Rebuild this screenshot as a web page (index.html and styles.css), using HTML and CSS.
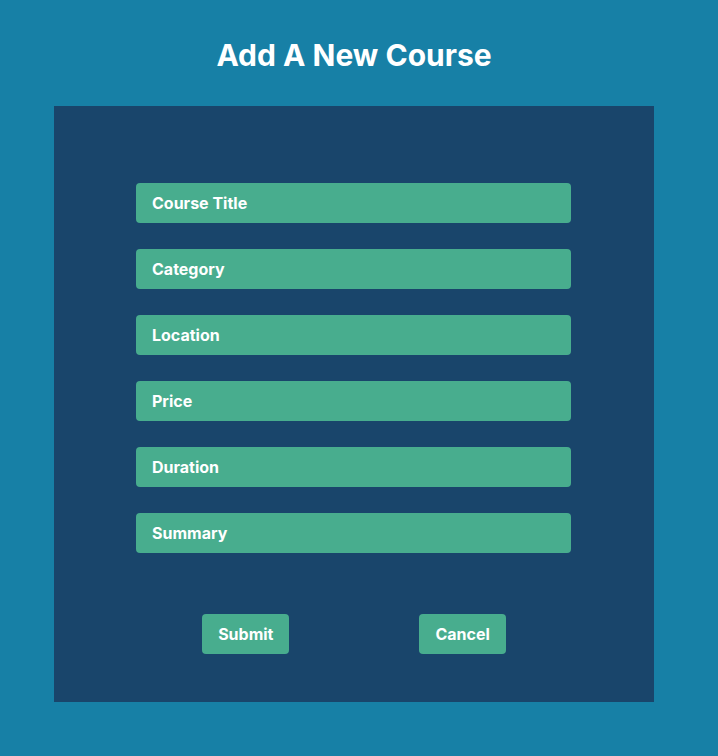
FILE: index.html
```html
<!DOCTYPE html>
<html>
<head>
<meta charset="utf-8">
<link rel="stylesheet" href="styles.css">
</head>
<body>
<div class="page">
  <h1 class="title">Add A New Course</h1>
  <form class="panel">
    <div class="fields">
      <input class="field" type="text" placeholder="Course Title">
      <input class="field" type="text" placeholder="Category">
      <input class="field" type="text" placeholder="Location">
      <input class="field" type="text" placeholder="Price">
      <input class="field" type="text" placeholder="Duration">
      <input class="field" type="text" placeholder="Summary">
    </div>
    <div class="actions">
      <button class="btn" type="button">Submit</button>
      <button class="btn" type="button">Cancel</button>
    </div>
  </form>
</div>
</body>
</html>
```
FILE: styles.css
```css
html, body {
  margin: 0;
  padding: 0;
  background: #1780a6;
  font-family: Inter, "Noto Sans", sans-serif;
}
.page {
  width: 708px;
  height: 756px;
  display: flex;
  flex-direction: column;
  align-items: center;
}
.title {
  margin: 0;
  height: 106px;
  box-sizing: border-box;
  padding-top: 40px;
  line-height: 1;
  font-size: 30px;
  font-weight: 700;
  color: #ffffff;
}
.panel {
  width: 600px;
  height: 596px;
  background: #19456b;
  box-sizing: border-box;
  padding-top: 77px;
  display: flex;
  flex-direction: column;
  align-items: center;
}
.fields {
  display: flex;
  flex-direction: column;
  gap: 26px;
  margin-right: 1px;
}
.field {
  width: 435px;
  height: 40px;
  box-sizing: border-box;
  border: none;
  border-radius: 4px;
  background: #48ad8e;
  padding: 0 16px;
  font-family: Inter, "Noto Sans", sans-serif;
  font-size: 16px;
  font-weight: 700;
  color: #ffffff;
  outline: none;
}
.field::placeholder {
  color: #ffffff;
  opacity: 1;
}
.actions {
  margin-top: 61px;
  display: flex;
  gap: 130px;
  justify-content: center;
}
.btn {
  height: 40px;
  padding: 0 16px;
  border: none;
  border-radius: 4px;
  background: #48ad8e;
  color: #ffffff;
  font-family: Inter, "Noto Sans", sans-serif;
  font-size: 16px;
  font-weight: 700;
  cursor: pointer;
}
```
